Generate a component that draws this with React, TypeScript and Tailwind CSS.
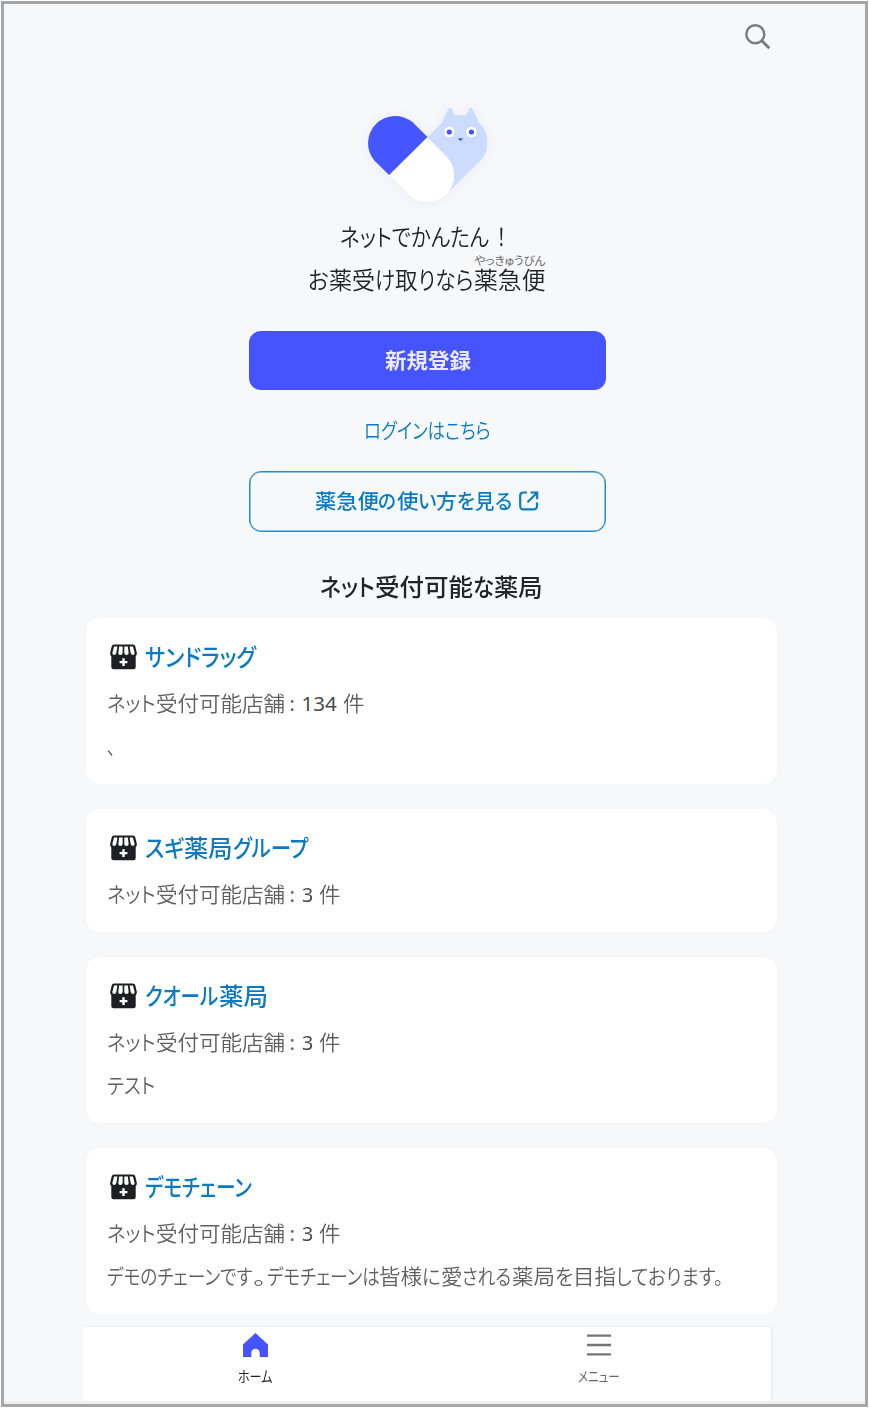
import { useLayoutEffect, useRef, useState } from "react";
import type { ReactNode } from "react";

/** A run of text whose glyphs are condensed to fill a given width. */
function Run({ w, children, className = "" }: { w: number; children: ReactNode; className?: string }) {
  const ref = useRef<HTMLSpanElement>(null);
  const [scale, setScale] = useState(1);
  useLayoutEffect(() => {
    if (ref.current) setScale(w / ref.current.offsetWidth);
  }, [w]);
  return (
    <span className={`inline-block shrink-0 whitespace-nowrap ${className}`} style={{ width: w }}>
      <span ref={ref} className="inline-block origin-left" style={{ transform: `scaleX(${scale})` }}>
        {children}
      </span>
    </span>
  );
}

type Segment = [string, number];

function Runs({ parts }: { parts: Segment[] }) {
  return (
    <>
      {parts.map(([text, w], i) => (
        <Run key={i} w={w}>
          {text}
        </Run>
      ))}
    </>
  );
}

function SearchIcon() {
  return (
    <svg className="h-7 w-7" viewBox="0 0 28 28" fill="none" stroke="#7b7b7b" strokeWidth="2.4">
      <circle cx="11.3" cy="11.3" r="9" />
      <path d="M17.8 17.8L25.3 25.3" strokeWidth="2.8" />
    </svg>
  );
}

function Logo() {
  return (
    <svg className="h-[130px] w-[160px]" viewBox="350 90 160 130">
      <defs>
        <filter id="glow" x="-20%" y="-20%" width="140%" height="140%">
          <feDropShadow dx="0" dy="1" stdDeviation="5" floodColor="#5060c0" floodOpacity="0.08" />
        </filter>
      </defs>
      <g filter="url(#glow)">
        <path
          d="M427.3 137.5L441.6 123.2C443.8 118.5 446.3 112.5 448.8 108.3Q450 106.6 451.2 108.3L455 115.3Q460.5 114.6 466 115.3L469.6 108.3Q470.8 106.6 472 108.3C474.4 112.5 476.8 118 478.8 122.4C489.5 131 490.5 151 480 161L450 190.5L410 170Z"
          fill="#ccdcff"
        />
        <path d="M389 175L427.4 137.3L446.5 156.5A26.8 26.8 0 0 1 408.6 194.4Z" fill="#fff" />
        <path d="M389.1 175.1L374.3 160.6A27.2 27.2 0 0 1 412.6 122.3L427.5 137.1Z" fill="#4554ff" />
      </g>
      <circle cx="449.3" cy="132" r="5.3" fill="#fff" />
      <circle cx="471.4" cy="132" r="5.3" fill="#fff" />
      <circle cx="449.3" cy="132" r="2.6" fill="#4554ff" />
      <circle cx="471.4" cy="132" r="2.6" fill="#4554ff" />
      <path d="M457.8 138.3H463.2L460.5 141.2Z" fill="#4554ff" />
    </svg>
  );
}

function ExternalIcon() {
  return (
    <svg className="h-5 w-5" viewBox="0 0 20 20" fill="none" stroke="#0e7cc3" strokeWidth="2.2">
      <path d="M8 1.5H4.2A3 3 0 0 0 1.2 4.5V15.3A3 3 0 0 0 4.2 18.3H15A3 3 0 0 0 18 15.3V11.5M11.5 1.5H18.2V8.3M18 1.7L8.5 11.2" />
    </svg>
  );
}

function StoreIcon() {
  return (
    <svg className="h-[26px] w-[27px] shrink-0" viewBox="0 0 27 26">
      <path
        d="M4 .5H23Q24.7 .5 25.2 2L26.8 8.700Q27.100 11.200 25.700 12.200V22.900Q25.700 25.200 23.400 25.200H3.600Q1.300 25.200 1.300 22.900V12.200Q-.1 11.200 .2 8.700L1.800 2Q2.300 .5 4 .5Z"
        fill="#1d2023"
      />
      <g fill="#fff">
        <path d="M4.100 2.600H7.400L6.300 9Q5.800 10.900 4 10.900Q2 10.700 2.400 8.700Z" />
        <path d="M9.100 2.600H12.600V8.900Q12.400 10.900 10.300 10.900Q8.100 10.700 8.300 8.900Z" />
        <path d="M14.300 2.600H17.800L18.600 8.900Q18.600 10.900 16.500 10.900Q14.400 10.700 14.300 8.900Z" />
        <path d="M19.600 2.600H22.900L24.600 8.700Q25 10.700 23 10.900Q21.200 10.900 20.700 9Z" />
        <path d="M12.300 14.200H14.700V16.900H17.400V19.300H14.700V22H12.300V19.300H9.600V16.900H12.300Z" />
      </g>
    </svg>
  );
}

function HomeIcon() {
  return (
    <svg className="h-6 w-[25px]" viewBox="0 0 25 24">
      <path d="M12.5 0L25 11.5V24H16.7V20A4.2 4.2 0 0 0 8.3 20V24H0V11.5Z" fill="#4554ff" />
    </svg>
  );
}

function MenuIcon() {
  return (
    <svg className="h-6 w-6" viewBox="0 0 24 24" stroke="#757575" strokeWidth="2.4">
      <path d="M0 2.6H24M0 12H24M0 21.4H24" />
    </svg>
  );
}

function Card({
  name,
  count,
  countWidth,
  note,
  className,
}: {
  name: Segment[];
  count: string;
  countWidth: number;
  note?: Segment[];
  className: string;
}) {
  return (
    <section className={`rounded-[13px] bg-white pl-[21px] shadow-[0_0_2px_rgba(0,0,0,0.04)] ${className}`}>
      <h3 className="flex h-10 items-center text-[23.5px] leading-[38px] font-medium text-[#0a7ac4]">
        <span className="mr-[8px] ml-[3px] flex">
          <StoreIcon />
        </span>
        <span className="flex pb-[2px]">
          <Runs parts={name} />
        </span>
      </h3>
      <p className="mt-[5px] flex h-[43px] items-center text-[21px] leading-[41px]">
        <span className="flex pb-[2px]">
          <Runs parts={[["ネット", 48.5], ["受付可能店舗", 129]]} />
        </span>
        <span className="w-[17px] pl-[5px] font-['Noto_Sans'] text-[20px] font-normal">:</span>
        <Run w={countWidth} className="mr-[6px] font-['Noto_Sans'] text-[20.5px] font-normal text-[#4a4a4a]">
          {count}
        </Run>
        <Run w={21.5} className="pb-[2px]">件</Run>
      </p>
      {note && (
        <p className="flex h-[41px] items-center text-[21px] leading-[41px]">
          <Runs parts={note} />
        </p>
      )}
    </section>
  );
}

export default function App() {
  return (
    <div className="h-[1408px] w-[869px] bg-white p-px font-['Noto_Sans_CJK_JP',sans-serif] [font-feature-settings:'palt']">
      <div className="flex h-[1406px] w-[867px] flex-col overflow-hidden border-[3px] border-[#a6a6a6] bg-[#f6f8fa]">
        <header className="flex h-[86px] justify-end pt-[19px] pr-[93px]">
          <SearchIcon />
        </header>
        <main className="flex flex-col">
          <div className="ml-[345.5px] h-[130px]">
            <Logo />
          </div>
          <div className="ml-[304px] text-[23.5px] font-[350] text-[#222]">
            <div className="flex h-[32px] pl-[32px] leading-[32px]">
              <Runs parts={[["ネットでかんたん", 149]]} />
              <Run w={9} className="ml-[8px] font-normal">！</Run>
            </div>
            <div className="flex h-[12px] items-center pl-[166.5px] text-[11.5px] leading-[12px] font-normal text-[#666]">
              <Run w={71} className="pt-[3px]">やっきゅうびん</Run>
            </div>
            <div className="flex h-[28px] pt-px leading-[28px]">
              <Runs parts={[["お", 21], ["薬受", 46], ["け", 20], ["取", 23], ["りなら", 55.5], ["薬急便", 72]]} />
            </div>
          </div>
          <div className="mt-[38.5px] ml-[244.5px] flex w-[357px] flex-col">
            <button className="flex h-[59px] items-center justify-center rounded-[12px] bg-[#4554ff] text-[21px] font-bold text-[#ebebfd]">
              <Run w={86}>新規登録</Run>
            </button>
            <a className="flex h-[81px] items-center justify-center pb-px text-[21px] font-[350] text-[#0a7ac4]">
              <Run w={127}>ログインはこちら</Run>
            </a>
            <button className="flex h-[61.5px] items-center justify-center rounded-[12px] border border-[#268cc9] text-[20.5px] font-medium text-[#0a7ac4] shadow-[inset_0_0_0_0.5px_#268cc9]">
              <span className="flex pb-[2px]">
                <Runs parts={[["薬急便", 64.5], ["の", 18], ["使", 22], ["い", 18], ["方", 21], ["を", 18], ["見", 20], ["る", 17]]} />
              </span>
              <span className="mr-[2px] ml-[7px] flex">
                <ExternalIcon />
              </span>
            </button>
          </div>
          <h2 className="ml-[316px] flex h-[60px] items-center pt-[48px] text-[24px] leading-[60px] font-medium text-[#222527]">
            <Runs parts={[["ネット", 54.5], ["受付可能", 98], ["な", 21.5], ["薬局", 48.5]]} />
          </h2>
          <div className="mt-[25.5px] ml-[82px] flex w-[691px] flex-col font-[350] text-[#606060]">
            <Card
              className="h-[166px] pt-[19px]"
              name={[["サンドラッグ", 111]]}
              count="134"
              countWidth={35}
              note={[["、", 9]]}
            />
            <Card
              className="mt-[25.5px] h-[123px] pt-[19px]"
              name={[["スギ", 39], ["薬局", 48.5], ["グループ", 76]]}
              count="3"
              countWidth={11.5}
            />
            <Card
              className="mt-[25px] h-[166px] pt-[19px]"
              name={[["クオール", 73.5], ["薬局", 49]]}
              count="3"
              countWidth={11.5}
              note={[["テスト", 48]]}
            />
            <Card
              className="mt-[25px] h-[166px] pt-[19px]"
              name={[["デモチェーン", 107]]}
              count="3"
              countWidth={11.5}
              note={[
                ["デモのチェーンです", 145.5],
                ["。", 14],
                ["デモチェーンは", 112.5],
                ["皆様", 43],
                ["に", 18.5],
                ["愛", 21.5],
                ["される", 49.5],
                ["薬局", 43],
                ["を", 18],
                ["目指", 43],
                ["しております。", 107],
              ]}
            />
          </div>
        </main>
        <nav className="mt-[13px] ml-[79px] grid h-[74px] w-[688px] shrink-0 grid-cols-2 bg-white text-[14.5px] shadow-[1px_0_2px_rgba(0,0,0,0.08)]">
          <a className="flex flex-col items-center pt-[6px] text-[#222]">
            <HomeIcon />
            <span className="flex h-10 items-center pb-[2px] leading-[38px]">
              <Run w={34}>ホーム</Run>
            </span>
          </a>
          <a className="flex flex-col items-center pt-[6px] text-[#666]">
            <MenuIcon />
            <span className="flex h-10 items-center pb-[2px] leading-[38px]">
              <Run w={42}>メニュー</Run>
            </span>
          </a>
        </nav>
        <div className="h-[3px] shrink-0 bg-[#f0f0f0]" />
      </div>
    </div>
  );
}
